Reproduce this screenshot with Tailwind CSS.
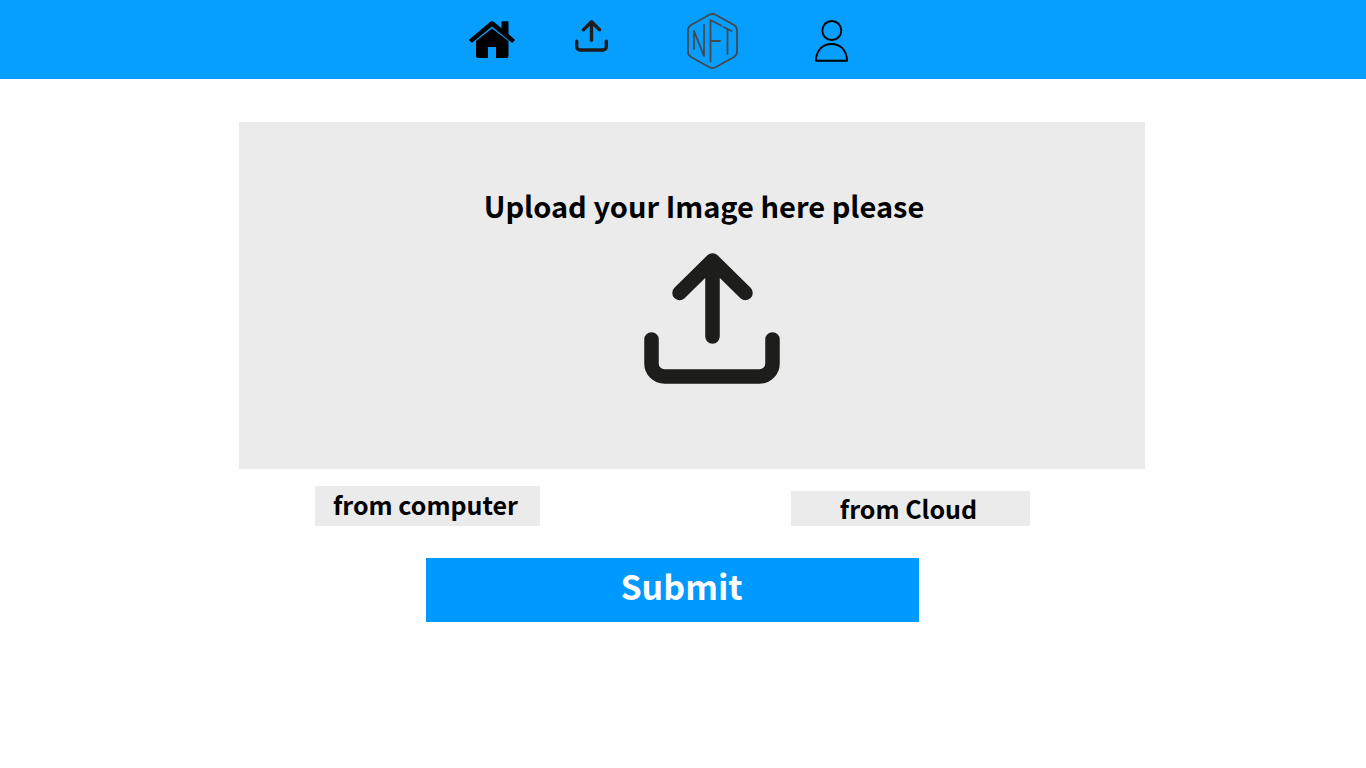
<!DOCTYPE html>
<html lang="en">
<head>
<meta charset="utf-8">
<meta name="viewport" content="width=device-width, initial-scale=1">
<title>Upload image</title>
<script src="https://cdn.jsdelivr.net/npm/@tailwindcss/browser@4"></script>
</head>
<body class="min-h-screen bg-white font-['Noto_Sans_CJK_JP','Noto_Sans',sans-serif] font-bold text-black">
<header class="bg-[#069eff]">
  <nav aria-label="Main" class="flex h-[79px] items-start justify-center pt-[13px] pr-[49px]">
    <a href="#home" aria-label="Home" class="mt-2 mr-[60px]">
      <svg class="block h-[37px] w-[46px]" viewBox="0 0 46 37">
        <path d="M7 20 23 7.500 39.500 20V35Q39.500 37 37.500 37H27V26H19V37H9Q7 37 7 35Z"/>
        <path d="M.6 18.300Q0 19 .7 19.700L2 21.200Q2.800 22 3.700 21.200L23 5.500 42.300 21.200Q43.200 22 44 21.200L45.300 19.700Q46 19 45.400 18.300L39.500 13V1Q39.500 .3 38.700 .3H33.300Q32.500 .3 32.500 1V7.200L25 1Q23 -.6 21 1Z"/>
      </svg>
    </a>
    <a href="#upload" aria-label="Upload" class="mt-[7px] mr-[79px]">
      <svg class="block h-8 w-[33px]" viewBox="0 0 136 132" preserveAspectRatio="none" fill="none" stroke="#1d1d1b" stroke-width="14" stroke-linecap="round" stroke-linejoin="round">
        <path d="M68 84V8M35 40 68 7 101 40M7 87V110A14 14 0 0 0 21 124H115A14 14 0 0 0 129 110V87"/>
      </svg>
    </a>
    <a href="#nft" aria-label="NFT" class="mr-[77px]">
      <svg class="block h-14 w-[51px]" viewBox="0 0 51 56" fill="none" stroke="#45494c" stroke-width="1.800" stroke-linecap="round" stroke-linejoin="round">
        <path d="M22 2Q25.500 0 29 2L47 12Q50 14 50 17V39Q50 42 47 44L29 54Q25.500 56 22 54L4 44Q1 42 1 39V17Q1 14 4 12Z"/>
        <path d="M7 36V18L17 43V12M23.500 48.500V7L34 12.500M23.500 28H33M36.500 14 44.500 18M40.500 16V41"/>
      </svg>
    </a>
    <a href="#profile" aria-label="Profile" class="mt-[7px]">
      <svg class="block h-[42px] w-[33px]" viewBox="0 0 33 42" fill="none" stroke="#000" stroke-width="1.900" stroke-linejoin="round">
        <circle cx="16.800" cy="10.500" r="9.500"/>
        <path d="M1 40.700C1 30 8 24 16.500 24S32 30 32 40.700Z"/>
      </svg>
    </a>
  </nav>
</header>
<main class="pt-[43px] pl-[18px]">
  <form class="mx-auto w-full max-w-[906px]">
    <section class="flex h-[347px] flex-col items-center bg-[#ebebeb] pt-16 pl-10">
      <h1 class="mr-4 text-[29px] leading-[38px]">Upload your Image here please</h1>
      <button type="button" aria-label="Upload image" class="mt-[29px]">
        <svg class="block h-[132px] w-[136px]" viewBox="0 0 136 132" fill="none" stroke="#1d1d1b" stroke-width="14.500" stroke-linecap="round" stroke-linejoin="round">
          <path d="M68.500 83.500V8M35.500 40 68.500 7.500 101.500 40M7.500 86.500V110.500A13 13 0 0 0 20.500 123.500H115.500A13 13 0 0 0 128.500 110.500V86.500"/>
        </svg>
      </button>
    </section>
    <div class="mt-[17px] flex items-end justify-between pr-[115px] pl-[76px]">
      <button type="button" class="h-10 w-[225px] bg-[#ebebeb] pr-1 pb-1 text-[25px] leading-[36px]">from computer</button>
      <button type="button" class="h-[35px] w-[239px] bg-[#ebebeb] pr-1 text-[25px] leading-[35px]">from Cloud</button>
    </div>
    <button type="submit" class="mt-8 ml-[187px] block h-16 w-[493px] bg-[#0099ff] pb-2 pl-[18px] text-[34px] leading-[56px] text-white">Submit</button>
  </form>
</main>
</body>
</html>
